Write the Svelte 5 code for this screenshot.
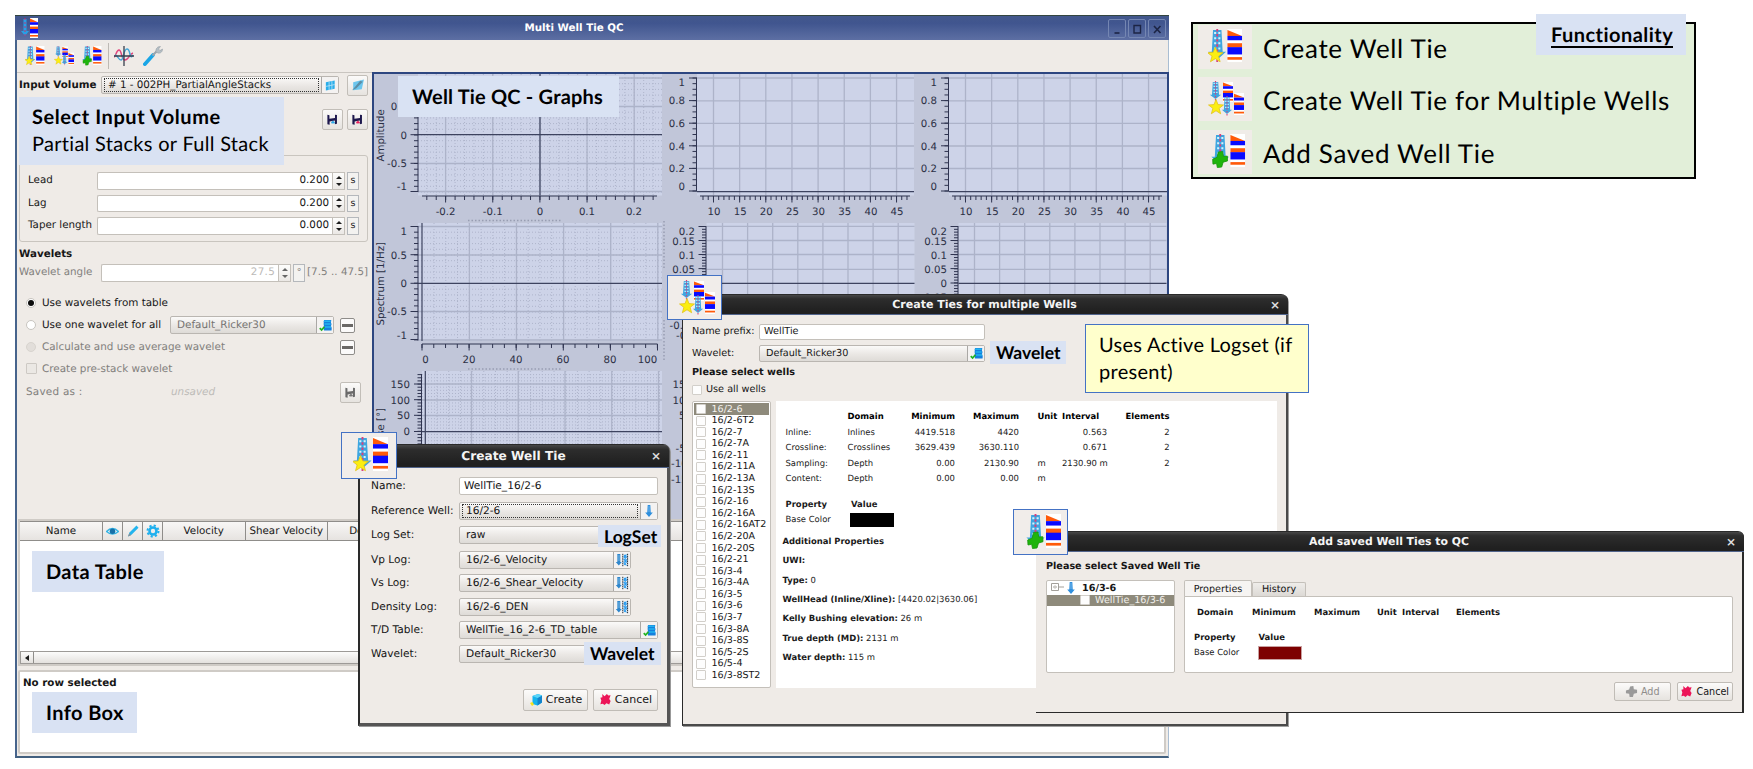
<script>
  const range = (a, b, s) => {
    const out = [];
    for (let v = a; v <= b + 0.001; v += s) out.push(+v.toFixed(2));
    return out;
  };

  const wells = [
    '16/2-6', '16/2-6T2', '16/2-7', '16/2-7A', '16/2-11', '16/2-11A', '16/2-13A', '16/2-13S',
    '16/2-16', '16/2-16A', '16/2-16AT2', '16/2-20A', '16/2-20S', '16/2-21', '16/3-4', '16/3-4A',
    '16/3-5', '16/3-6', '16/3-7', '16/3-8A', '16/3-8S', '16/5-2S', '16/5-4', '16/3-8ST2'
  ];

  const domain = [
    ['', 'Domain', 'Minimum', 'Maximum', 'Unit', 'Interval', 'Elements'],
    ['Inline:', 'Inlines', '4419.518', '4420', '', '0.563', '2'],
    ['Crossline:', 'Crosslines', '3629.439', '3630.110', '', '0.671', '2'],
    ['Sampling:', 'Depth', '0.00', '2130.90', 'm', '2130.90 m', '2'],
    ['Content:', 'Depth', '0.00', '0.00', 'm', '', '']
  ];

  const extra = [
    ['Additional Properties', ''],
    ['UWI:', ''],
    ['Type:', '0'],
    ['WellHead (Inline/Xline):', '[4420.02|3630.06]'],
    ['Kelly Bushing elevation:', '26 m'],
    ['True depth (MD):', '2131 m'],
    ['Water depth:', '115 m']
  ];

  const tieRows = [
    { label: 'Reference Well:', value: '16/2-6', icon: 'well', focus: true },
    { label: 'Log Set:', value: 'raw', icon: '' },
    { label: 'Vp Log:', value: '16/2-6_Velocity', icon: 'log', short: true },
    { label: 'Vs Log:', value: '16/2-6_Shear_Velocity', icon: 'log', short: true },
    { label: 'Density Log:', value: '16/2-6_DEN', icon: 'log', short: true },
    { label: 'T/D Table:', value: 'WellTie_16_2-6_TD_table', icon: 'db' },
    { label: 'Wavelet:', value: 'Default_Ricker30', icon: '' }
  ];

  // Plot definitions in panel coordinates
  const plots = [
    {
      x: 418, y: 74, w: 244, h: 121.5, ax: 418, ay0: 78, ay1: 191.5,
      gx: range(445.6, 640, 47.15), gy: [106.5, 163.5, 191.5, 78],
      mx: range(426.8, 660, 9.43), my: range(78, 194, 5.7),
      zx: 540, zy: 134.7,
      yt: [78, 106.5, 134.7, 163.3, 191.5], ymt: range(78, 191.5, 5.7),
      yl: [['0.5', 106.5], ['0', 134.7], ['-0.5', 163.3], ['-1', 186]], lx: 407,
      sy: 196, s0: 422, s1: 657, xt: range(445.6, 640, 47.15), xmt: range(426.8, 657, 9.43),
      xl: [['-0.2', 445.6], ['-0.1', 492.8], ['0', 540], ['0.1', 587], ['0.2', 634]], ly: 211
    },
    ...[0, 252].map((o) => ({
      x: 697 + o, y: 74, w: o ? 218 : 217, h: 121.5, ax: 696.5 + o, ay0: 78, ay1: 191,
      gx: range(713.5 + o, 900 + o, 26.15), gy: [78, 100.8, 123.3, 146, 168.5], mx: [], my: [],
      zx: 0, zy: 191.7,
      yt: range(78, 192, 22.6), ymt: range(78, 191, 5.65),
      yl: [['1', 82], ['0.8', 100.5], ['0.6', 123.3], ['0.4', 145.8], ['0.2', 168.5], ['0', 186]], lx: 685 + o,
      sy: 196, s0: 700 + o, s1: 910 + o, xt: range(713.5 + o, 900 + o, 26.15), xmt: range(703 + o, 910 + o, 5.23),
      xl: [10, 15, 20, 25, 30, 35, 40, 45].map((v, i) => [String(v), 714 + o + i * 26.15]), ly: 211
    })),
    {
      x: 418, y: 223, w: 244, h: 118, ax: 418, ay0: 226.5, ay1: 340,
      gx: range(469.4, 660, 47.1), gy: [226.5, 255, 311.5, 340],
      mx: range(434, 660, 11.77), my: range(226.5, 340, 5.7),
      zx: 422, zy: 283.3,
      yt: [226.5, 254.7, 283.3, 311.5, 339.5], ymt: range(226.5, 340, 5.67),
      yl: [['1', 231], ['0.5', 254.7], ['0', 283], ['-0.5', 311.5], ['-1', 335]], lx: 407,
      sy: 344, s0: 422, s1: 657.5, xt: range(422, 658, 47.1), xmt: range(422, 658, 11.77),
      xl: [['0', 425.5], ['20', 469], ['40', 516], ['60', 563], ['80', 610], ['100', 647.5]], ly: 359.5
    },
    ...[0, 252].map((o) => ({
      x: 706.5 + o, y: 223, w: 208, h: 118, ax: 706 + o, ay0: 226.5, ay1: 340,
      gx: range(722.5 + o, 900 + o, 25.1), gy: [226.3, 240.5, 254.5, 269.3], mx: [], my: [],
      zx: 0, zy: 283.4,
      yt: [226.5, 240.5, 254.5, 268.6, 283], ymt: range(226.5, 340, 2.82),
      yl: [['0.2', 231], ['0.15', 240.8], ['0.1', 254.7], ['0.05', 268.7], ['0', 282.7], ['-0.05', 297]], lx: 695 + o,
      sy: 0, s0: 0, s1: 0, xt: [], xmt: [], xl: [], ly: 0
    })),
    {
      x: 422, y: 371, w: 240, h: 120, ax: 421.5, ay0: 374.5, ay1: 490,
      gx: range(471.5, 660, 46.75), gy: [384, 400, 415.5, 447, 463],
      mx: range(437, 660, 11.7), my: range(374.6, 490, 3.15),
      zx: 425.3, zy: 431.6,
      yt: [384, 399.7, 415.3, 431.5, 447], ymt: range(374.6, 490, 3.15),
      yl: [['150', 384], ['100', 399.7], ['50', 415.5], ['0', 431.3]], lx: 410,
      sy: 0, s0: 0, s1: 0, xt: [], xmt: [], xl: [], ly: 0
    }
  ];

  const strays = [
    ['-0.1', 669.5, 325.5], ['-0.15', 676, 335], ['150', 672.6, 384], ['100', 672.6, 399.7], ['50', 679, 415.5],
    ['-50', 675.5, 448], ['-100', 671, 463.5], ['-150', 671, 479.3]
  ];
</script>

{#snippet derrick(cx, y0, h, w)}
  <path d="M{cx - w * 0.27} {y0 + 1}h{w * 0.54}l{w * 0.08} {h * 0.64}h{w * 0.22}L{cx} {y0 + h * 0.9}L{cx - w * 0.57} {y0 + 1 + h * 0.64}h{w * 0.22}z" fill="#3ea6e0" />
  {#each [0.12, 0.27, 0.42, 0.57] as f}
    <path d="M{cx - w * 0.2} {y0 + h * f}h{w * 0.13}M{cx + w * 0.07} {y0 + h * f}h{w * 0.13}" stroke="#d8eefa" stroke-width={h * 0.06} />
  {/each}
  <path d="M{cx} {y0}V{y0 + h}" stroke="#d8407c" stroke-width={w * 0.12} stroke-dasharray="{h * 0.07} {h * 0.08}" />
{/snippet}

{#snippet strata(x, y, w, h)}
  <rect {x} {y} width={w} height={h} fill="#fff" />
  <path d="M{x} {y + h * 0.03}L{x + w} {y + h * 0.21}H{x}z" fill="#ff5a0a" />
  <rect {x} y={y + h * 0.21} width={w} height={h * 0.13} fill="#0a0aff" />
  <rect {x} y={y + h * 0.43} width={w} height={h * 0.13} fill="#ff5a0a" />
  <rect {x} y={y + h * 0.55} width={w} height={h * 0.22} fill="#0a0aff" />
  <rect {x} y={y + h * 0.85} width={w} height={h * 0.08} fill="#ff5a0a" />
{/snippet}

{#snippet star(cx, cy, r)}
  <path transform="translate({cx} {cy}) scale({r})" d="M0-1L.27-.32 1-.27.42.18.62.9 0 .5-.62.9-.42.18-1-.27-.27-.32z" fill="#fbee12" stroke="#e0c018" stroke-width=".1" />
{/snippet}

{#snippet tieIcon(kind, size)}
  <svg viewBox="0 0 36 36" width={size} height={size}>
    {#if kind === 'multi'}
      {@render strata(15, 1, 10, 20)}
      {@render derrick(7.5, 0, 20, 10)}
      {@render strata(26, 12, 10, 22)}
      {@render derrick(19, 15, 20, 9)}
      {@render star(8, 26, 7.5)}
    {:else if kind === 'add'}
      {@render strata(20, 0, 15, 34)}
      {@render derrick(9.5, 0, 35, 16)}
      <path d="M7.500 18.500l4.500-.5.800 5 4-.3.200 5-4.500 1.300-1.500 5-4.500.5-.8-4.200L2 31l-.3-5 4.500-2z" fill="#1fb40c" stroke="#17940a" stroke-width=".8" stroke-linejoin="round" />
    {:else}
      {@render strata(20, 0, 15, 34)}
      {@render derrick(9.5, 0, 35, 16)}
      {@render star(7.5, 26.500, 8)}
    {/if}
  </svg>
{/snippet}

{#snippet dbIcon()}
  <svg viewBox="0 0 14 14" width="13" height="13">
    <path d="M5.500 1h7.500q.5.800 0 1.800-.5 1.200.3 2 .4 1-.2 2-.6 1.200.4 2.200.4 1.500 0 3.500H5.500q-1-2 0-3.500-1-1.500 0-2.500-1.300-1-.3-2.300-.7-1.800.3-3.200z" fill="#1680dc" />
    <path d="M5.500 2.500h7M6 5.500h6.500M6.500 8.700h6.500" stroke="#22b4f0" stroke-width="1.600" />
    <path d="M.8 9.800l2 2L5.800 8.500" fill="none" stroke="#22b422" stroke-width="1.800" />
  </svg>
{/snippet}

{#snippet logIcon()}
  <svg viewBox="0 0 14 14" width="14" height="14">
    <path d="M2.300 1h3v8h1.500L3.800 12.500.8 9h1.500z" fill="#2e86cc" />
    <path d="M2.300 3h3M2.300 5h3M2.300 7h3" stroke="#a9d6f2" stroke-width=".6" />
    <path d="M7.800.8v12.400M12.600.8v12.400" stroke="#222c38" stroke-width="1" stroke-dasharray="1.600 .6" />
    <path d="M9 2l2.500 2L9 6.500l2.500 2.500L9 12M11.500 1.500L9 4l2.500 3L9 9.500l2.500 3" fill="none" stroke="#2a9cf0" stroke-width="1.100" />
  </svg>
{/snippet}

{#snippet wellGlyph()}
  <svg viewBox="0 0 10 14" width="10" height="14">
    <path d="M3.700 1h2.600l.5 7.500h2L5 13 1.200 8.500h2z" fill="#2f8fdd" />
    <path d="M3.500 3h3M3.500 5h3M3.500 7h3" stroke="#9fd2f5" stroke-width=".6" />
  </svg>
{/snippet}

{#snippet saveIcon(main, accent)}
  <svg viewBox="0 0 14 14" width="13" height="13">
    <path d="M1.500 2l2.200.3v4l6-.8V1.800l2.100.3v9.500l-2.200.5V8.200l-5.700.9v3.500l-2.400-.4z" fill={main} />
    <path d="M4.900 2.500l4-.3v1.800l-4 .6z" fill="#f4f2f4" />
    <path d="M5.700 10.800l1.800-1.900 1.800 1.900M7.500 9v2.500" fill="none" stroke={accent} stroke-width="1.200" />
  </svg>
{/snippet}

{#snippet spin()}
  <span class="spin"><i class="up"></i><i class="down"></i></span>
{/snippet}

{#snippet cancelIcon()}
  <svg viewBox="0 0 14 14" width="13" height="13">
    <path d="M3.500 1l2.500 2.500L8.500 1l1.500 1.800 2.500-.3-1.500 4 1.500 2-1.500 4-3-1.500-2 2-2-1.500-2.500.5 1-4L1.500 5l2.200-.5z" fill="#ec1558" />
  </svg>
{/snippet}

<div class="desk">
  <section class="main">
    <header class="mtitle">
      <svg class="mlogo" viewBox="0 0 20 20" width="20" height="20">
        <path d="M4.500 1h3v12h2.500L6 18 2 13h2.500z" fill="#28a0e6" />
        <path d="M6 0v20" stroke="#c03070" stroke-width="1" stroke-dasharray="2 2" />
        {@render strata(11, 0, 8, 20)}
      </svg>
      <b>Multi Well Tie QC</b>
      <span class="wbtns">
        <i><svg viewBox="0 0 14 18" width="14" height="18"><path d="M4.500 13h5" stroke="#1c2444" stroke-width="1.600" /></svg></i>
        <i><svg viewBox="0 0 14 18" width="14" height="18"><path d="M4 5.500h6.500v7.500H4z" fill="none" stroke="#1c2444" stroke-width="1.400" /></svg></i>
        <i><svg viewBox="0 0 14 18" width="14" height="18"><path d="M4 6l6.500 7M10.500 6L4 13" stroke="#1c2444" stroke-width="1.600" /></svg></i>
      </span>
    </header>
    <nav class="tools">
      {@render tieIcon('one', 20)}
      {@render tieIcon('multi', 20)}
      {@render tieIcon('add', 20)}
      <i class="sep"></i>
      <svg viewBox="0 0 20 20" width="20" height="20">
        <path d="M0 11c2 0 2-7 5-7s2 10 6 10 4-6 8-7" fill="none" stroke="#e0447c" stroke-width="1.400" />
        <path d="M1 9c4 1 3 5 6 5s2-11 6-11 2 12 6 6" fill="none" stroke="#44a6d8" stroke-width="1.500" />
        <path d="M0 10h20M10 0v20" stroke="#38404e" stroke-width="1.300" />
      </svg>
      <svg class="wrench" viewBox="0 0 20 20" width="20" height="20">
        <path d="M1.800 18.200L10 9" stroke="#1ba6e6" stroke-width="3.600" stroke-linecap="round" />
        <path d="M9.500 9.500l5-5" stroke="#9aa6ae" stroke-width="2.200" />
        <path d="M13 5.500c-.5-3 1.500-5 4.500-5l-2 2.500 1.500 1.500 2.500-1.500c0 3-2 4.700-5 4z" fill="#b4bec4" stroke="#8c979e" stroke-width=".5" />
      </svg>
    </nav>

    <div class="middle">
      <aside class="panel">
        <div class="row r-input">
          <b class="lbl">Input Volume</b>
          <div class="combo focus"><span># 1 - 002PH_PartialAngleStacks</span><em>
            <svg viewBox="0 0 14 14" width="13" height="13"><path d="M2 3.500L11.500 1.500v9L2 12.500z" fill="#2aaeea" /><path d="M2 8l9.500-2M5.500 3v9M8.500 2.300v9" stroke="#c4e8f8" stroke-width=".8" /></svg>
          </em></div>
          <button class="sq" aria-label="Edit volume">
            <svg viewBox="0 0 14 14" width="15" height="15"><path d="M3 4l10-2.500-2 9-8 1z" fill="#6cc6ee" /><path d="M2 11.500L9.500 2.500l2.500 1L6 9.500z" fill="#5c8ea6" /></svg>
          </button>
        </div>
        <div class="row r-save">
          <button class="sq" aria-label="Save">{@render saveIcon('#1d174d', '#2ba8e8')}</button>
          <button class="sq" aria-label="Save as">{@render saveIcon('#1d174d', '#e8205c')}</button>
        </div>
        <div class="group">
          {#each [['Lead', '0.200'], ['Lag', '0.200'], ['Taper length', '0.000']] as [l, v]}
            <div class="num"><span class="nl">{l}</span><span class="nf">{v}</span>{@render spin()}<span class="unit">s</span></div>
          {/each}
        </div>
        <b class="wlh">Wavelets</b>
        <div class="num angle dim"><span class="nl">Wavelet angle</span><span class="nf">27.5</span>{@render spin()}<span class="unit">°</span><span class="rng">[7.5 .. 47.5]</span></div>
        <div class="opt o1"><i class="radio on"></i><span>Use wavelets from table</span></div>
        <div class="opt o2"><i class="radio"></i><span>Use one wavelet for all</span>
          <div class="combo grey"><span>Default_Ricker30</span><em>{@render dbIcon()}</em></div><i class="minus"></i></div>
        <div class="opt o3 dim"><i class="radio off"></i><span>Calculate and use average wavelet</span><i class="minus"></i></div>
        <div class="opt o4 dim"><i class="check"></i><span>Create pre-stack wavelet</span></div>
        <div class="opt o5 dim"><span class="sa">Saved as :</span><span class="un">unsaved</span><button class="sq" aria-label="Save wavelet">{@render saveIcon('#6a6a6a', '#777')}</button></div>
      </aside>

      <svg class="graphs" viewBox="372 72 797 451" width="797" height="451">
        <rect x="372" y="72" width="797" height="451" fill="#c1c6d9" />
        {#each plots as p}
          <rect x={p.x} y={p.y} width={p.w} height={p.h} fill="#cdd3e8" />
          {#each p.mx as x}<path d="M{x} {p.y}V{p.y + p.h}" class="minor" />{/each}
          {#each p.my as y}<path d="M{p.x} {y}H{p.x + p.w}" class="minor" />{/each}
          {#each p.gx as x}<path d="M{x} {p.y}V{p.y + p.h}" class="major" />{/each}
          {#each p.gy as y}<path d="M{p.x} {y}H{p.x + p.w}" class="major" />{/each}
          <path d="M{p.x} {p.zy}H{p.x + p.w}" class="zero" />
          {#if p.zx}<path d="M{p.zx} {p.y}V{p.y + p.h}" class="zero" />{/if}
          <path d="M{p.ax} {p.ay0 - 0.5}V{p.ay1 + 0.5}" class="axis" />
          {#each p.ymt as y}<path d="M{p.ax - 4} {y}H{p.ax}" class="axis" />{/each}
          {#each p.yt as y}<path d="M{p.ax - 7.5} {y}H{p.ax}" class="axis" />{/each}
          {#each p.yl as [t, y]}<text x={p.lx} y={y + 3.8} text-anchor="end">{t}</text>{/each}
          {#if p.sy}
            <path d="M{p.s0} {p.sy}H{p.s1}" class="axis" />
            {#each p.xmt as x}<path d="M{x} {p.sy}v4" class="axis" />{/each}
            {#each p.xt as x}<path d="M{x} {p.sy}v6.500" class="axis" />{/each}
            {#each p.xl as [t, x]}<text {x} y={p.ly + 3.8} text-anchor="middle">{t}</text>{/each}
          {/if}
        {/each}
        {#each strays as [t, x, y]}<text {x} y={y + 3.8}>{t}</text>{/each}
        <text transform="translate(383.500 161.500) rotate(-90)">Amplitude</text>
        <text transform="translate(383.500 325.500) rotate(-90)">Spectrum [1/Hz]</text>
        <text transform="translate(383.500 408) rotate(-90)" text-anchor="end">Phase [°]</text>
        <path d="M468 220.500H561M468 369H561M664 221V270M664 320V362" class="grip" />
        <rect x="373" y="73" width="795" height="449" fill="none" stroke="#2d4680" stroke-width="2" />
      </svg>
    </div>

    <div class="table">
      <div class="thead">
        <span class="c1">Name</span>
        <span class="ci"><svg viewBox="0 0 14 12" width="13" height="12"><path d="M.5 6.500Q7 0 13.500 6.500 7 12 .5 6.500z" fill="#eef6fa" stroke="#35b4e4" stroke-width="1.600" /><circle cx="7" cy="6.300" r="3" fill="#1670a8" /></svg></span>
        <span class="ci"><svg viewBox="0 0 14 14" width="14" height="14"><path d="M2 12.500l1.500-4L10.500 1.500l2 2.300-7 7z" fill="#22b4ee" /><path d="M2 12.500l1.200-3.200 1.900 1.900z" fill="#8a8f94" /></svg></span>
        <span class="ci"><svg viewBox="0 0 14 14" width="14" height="14"><circle cx="7" cy="7" r="3.500" fill="none" stroke="#1fb0ee" stroke-width="2.600" /><circle cx="7" cy="7" r="5.500" fill="none" stroke="#1fb0ee" stroke-width="2" stroke-dasharray="2.160 2.160" /></svg></span>
        <span class="c2">Velocity</span>
        <span class="c3">Shear Velocity</span>
        <span class="c4">Density</span>
        <span class="c5"></span>
      </div>
      <div class="tbody"></div>
      <div class="hscroll"><i></i><span></span></div>
    </div>
    <div class="info"><b>No row selected</b></div>
  </section>

  <div class="tag t-select"><b>Select Input Volume</b><br />Partial Stacks or Full Stack</div>
  <div class="tag t-graphs"><b>Well Tie QC - Graphs</b></div>
  <div class="tag t-table"><b>Data Table</b></div>
  <div class="tag t-info"><b>Info Box</b></div>

  <section class="dlg create">
    <header><b>Create Well Tie</b><i class="x">×</i></header>
    <div class="form">
      <div class="frow"><span>Name:</span><div class="input">WellTie_16/2-6</div></div>
      {#each tieRows as r}
        <div class="frow"><span>{r.label}</span>
          <div class="combo" class:focus={r.focus} class:short={r.short}><span>{r.value}</span>{#if r.icon}<em>
            {#if r.icon === 'well'}{@render wellGlyph()}{:else if r.icon === 'log'}{@render logIcon()}{:else}{@render dbIcon()}{/if}
          </em>{/if}</div>
        </div>
      {/each}
      <footer>
        <button class="btn"><svg viewBox="0 0 14 14" width="14" height="14"><path d="M3.500 3L9 1l4 1.500V9.500L8.500 12.500 3.500 11z" fill="#14b4ee" /><path d="M8.500 5L13 2.500v7L8.500 12.500z" fill="#1284cc" /><path d="M3.500 3L9 1l4 1.500L8.500 5z" fill="#5cd4f8" /><path d="M1 10l2.500-1L5 11.500 3 13z" fill="#f6e21a" /></svg>Create</button>
        <button class="btn">{@render cancelIcon()}Cancel</button>
      </footer>
    </div>
  </section>
  <div class="tag sm t-logset"><b>LogSet</b></div>
  <div class="tag sm t-wav1"><b>Wavelet</b></div>
  <div class="tile k1">{@render tieIcon('one', 36)}</div>

  <section class="dlg multi">
    <header><b>Create Ties for multiple Wells</b><i class="x">×</i></header>
    <div class="mbody">
      <div class="frow"><span>Name prefix:</span><div class="input">WellTie</div></div>
      <div class="frow"><span>Wavelet:</span><div class="combo"><span>Default_Ricker30</span><em>{@render dbIcon()}</em></div></div>
      <b class="psw">Please select wells</b>
      <div class="all"><i class="check w"></i>Use all wells</div>
      <div class="split">
        <ul class="wells">
          {#each wells as w, i}<li class:sel={i === 0}><i class="check w"></i>{w}</li>{/each}
        </ul>
        <div class="props">
          <div class="dgrid">
            {#each domain as row, i}{#each row as c, j}<span class:b={i === 0} class:r={j === 2 || j === 3 || j === 6 || (j === 5 && i > 0)} class:u={j === 4}>{c}</span>{/each}{/each}
          </div>
          <div class="pgrid"><b>Property</b><b class="v">Value</b><span>Base Color</span><i class="black"></i></div>
          {#each extra as [k, v]}<p><b>{k}</b> {v}</p>{/each}
        </div>
      </div>
      <div class="under"><i></i><i></i></div>
    </div>
  </section>
  <div class="tag sm t-wav2"><b>Wavelet</b></div>
  <div class="note">Uses Active Logset (if<br />present)</div>
  <div class="tile k2">{@render tieIcon('multi', 36)}</div>

  <section class="dlg saved">
    <header><b>Add saved Well Ties to QC</b><i class="x">×</i></header>
    <div class="sbody">
      <b class="pst">Please select Saved Well Tie</b>
      <div class="scols">
        <div class="tree">
          <div class="t1"><svg viewBox="0 0 14 12" width="14" height="12"><path d="M.5 1.500h7v7h-7zM2 5h4M7.500 5H13" fill="none" stroke="#a3a09a" stroke-width="1" /><path d="M4 3v4" stroke="#c9c6c0" /></svg>{@render wellGlyph()}<b>16/3-6</b></div>
          <div class="t2"><i class="check w"></i>WellTie_16/3-6</div>
        </div>
        <div class="tabbox">
          <div class="tabs"><span class="on">Properties</span><span>History</span></div>
          <div class="pane">
            <div class="sh"><b>Domain</b><b>Minimum</b><b>Maximum</b><b>Unit</b><b>Interval</b><b>Elements</b></div>
            <div class="pgrid"><b>Property</b><b>Value</b><span>Base Color</span><i class="red"></i></div>
          </div>
        </div>
      </div>
      <footer>
        <button class="btn off"><svg viewBox="0 0 14 14" width="13" height="13"><path d="M5.500 1.500l3.500-.5.500 3.500 3.500.5v3.500l-3.500 1-1 3.500H5l-.5-3.500-3.500-.5V6l3.500-1.200z" fill="#9a9a9a" /></svg>Add</button>
        <button class="btn">{@render cancelIcon()}Cancel</button>
      </footer>
    </div>
  </section>
  <div class="tile k3">{@render tieIcon('add', 36)}</div>

  <section class="func">
    <div class="fr"><span class="pic">{@render tieIcon('one', 35)}</span><span class="f1">Create Well Tie</span></div>
    <div class="fr"><span class="pic">{@render tieIcon('multi', 36)}</span><span class="f2">Create Well Tie for Multiple Wells</span></div>
    <div class="fr"><span class="pic p3">{@render tieIcon('add', 35)}</span><span class="f3">Add Saved Well Tie</span></div>
  </section>
  <div class="tag t-func"><b>Functionality</b></div>
</div>

<style>
  :global(body) { background: #fff; overflow: hidden; }
  .desk {
    position: relative; width: 1753px; height: 769px; overflow: hidden; background: #fff;
    font-family: 'DejaVu Sans', sans-serif; font-size: 10.3px; color: #161616; white-space: nowrap;
    text-rendering: geometricPrecision;
  }
  .desk :global(*) { box-sizing: border-box; }
  svg { display: block; flex: none; }
  i, em { font-style: normal; }
  button { font: inherit; color: inherit; padding: 0; margin: 0; }

  /* main window */
  .main {
    position: absolute; left: 15px; top: 15px; width: 1154px; height: 743px; background: #efebe7;
    border-left: 2px solid #47648c; border-right: 1px solid #a9bdd2; border-bottom: 2px solid #42607f;
    display: flex; flex-direction: column;
  }
  .mtitle {
    height: 25px; margin: 0 -1px 0 -2px; border-top: 1px solid #33453f; display: flex; align-items: center; justify-content: space-between;
    background: linear-gradient(#43588c, #40558f 30%, #5d6fa3); color: #fff; padding: 0 3px 0 4px;
  }
  .mtitle b { padding-left: 1px; }
  .wbtns { display: flex; gap: 2px; }
  .wbtns i { width: 18px; height: 19px; border: 1px solid #7486b2; border-radius: 2px; display: grid; place-items: center; }
  .tools { height: 32px; display: flex; align-items: center; padding: 0 0 1px 8px; gap: 8.500px; }
  .tools .sep { width: 1px; height: 26px; background: #bdb9b4; margin: 0 -3px; }
  .middle { display: flex; height: 451px; flex: none; margin-right: -1px; }
  .graphs { font-size: 10.2px; }
  .graphs text { fill: #2c3045; }
  .minor { stroke: #aeb4cb; stroke-width: 1; stroke-dasharray: 1 2; }
  .major { stroke: #adb3c9; stroke-width: 1.3; }
  .zero { stroke: #3d435f; stroke-width: 1.2; }
  .axis { stroke: #2f3450; stroke-width: 1; }
  .grip { stroke: #989db2; stroke-width: 1.5; stroke-dasharray: 1.500 2; fill: none; }

  .panel { flex: none; width: 355px; height: 449px; border-top: 1px solid #c9c5c0; padding-left: 2px; display: flex; flex-direction: column; }
  .row { display: flex; flex: none; }
  .r-input { height: 22px; margin-top: 1px; align-items: center; }
  .r-input .lbl { width: 82px; }
  .r-input .combo { width: 238px; height: 18px; margin-right: 8px; }
  .sq {
    width: 21px; height: 21px; border: 1px solid #c2beb8; border-radius: 2px; display: grid; place-items: center; flex: none;
    background: linear-gradient(#fbfaf9, #e6e3df);
  }
  .r-save { margin: 13px 0 0 303px; gap: 4px; height: 21px; }
  .group { flex: none; margin-top: 25px; width: 349px; height: 87px; border: 1px solid #c9c5bf; border-radius: 3px; padding: 16px 0 0 8px; display: flex; flex-direction: column; gap: 5px; }
  .num { display: flex; flex: none; height: 17.500px; align-items: stretch; line-height: 16px; }
  .num > * { flex: none; }
  .nl { width: 69px; }
  .nf { width: 235px; background: #fff; border: 1px solid #c4c0ba; border-right: 0; text-align: right; padding-right: 3px; border-radius: 2px 0 0 2px; line-height: 15px; }
  .spin { width: 13px; border: 1px solid #c4c0ba; background: linear-gradient(#fdfdfc, #ebe8e5); display: flex; flex-direction: column; justify-content: space-around; align-items: center; padding: 1px 0; }
  .up, .down { border: 3px solid transparent; width: 0; height: 0; }
  .up { border-top: 0; border-bottom: 3.500px solid #1d1d1d; }
  .down { border-bottom: 0; border-top: 3.500px solid #1d1d1d; }
  .unit { width: 12px; margin-left: 2px; border: 1px solid #b5b8bc; background: #f3f2f0; text-align: center; font-size: 9.500px; line-height: 15px; }
  .dim { color: #82807d; }
  .wlh { height: 14px; line-height: 14px; margin-top: 5px; }
  .angle { margin-top: 3px; }
  .angle .nl { width: 82px; }
  .angle .nf { width: 177px; color: #bcbab7; letter-spacing: .3px; }
  .angle .up { border-bottom-color: #666; }
  .angle .down { border-top-color: #666; }
  .rng { padding-left: 2px; letter-spacing: .05px; }
  .opt { display: flex; flex: none; align-items: center; height: 18px; padding-left: 7px; font-size: 10.4px; }
  .opt > span { margin-left: 6px; }
  .o1 { margin-top: 12px; }
  .o2 { margin-top: 4.500px; }
  .o2 > span { width: 122px; }
  .o2 .combo { width: 164px; height: 18px; margin-left: 6px; margin-right: 6px; }
  .o3 { margin-top: 4px; }
  .o3 > span { width: 298px; }
  .o4 { margin-top: 3.500px; }
  .o4 .check { margin-right: -1px; }
  .o5 { margin-top: 4px; height: 21px; }
  .o5 > .sa { margin-left: 0; width: 145px; letter-spacing: .25px; }
  .o5 > .un { margin-left: 0; width: 169px; font-style: italic; color: #bdbbb8; }
  .radio { width: 10px; height: 10px; border: 1px solid #c8c5c0; border-radius: 50%; background: #fff; flex: none; display: grid; place-items: center; }
  .radio.on::after { content: ''; width: 6px; height: 6px; background: #0c0c0c; border-radius: 50%; }
  .radio.off { background: #e2deda; border-color: #d8d4cf; }
  .check { width: 11px; height: 11px; border: 1px solid #cdc9c4; background: #ebe8e4; flex: none; border-radius: 1px; }
  .check.w { background: #fdfdfd; border-color: #d2cfca; width: 10px; height: 10px; }
  .minus { width: 15px; height: 15px; border: 1px solid #8e8c89; border-radius: 2px; background: #fbfafa; display: grid; place-items: center; flex: none; }
  .minus::after { content: ''; width: 11px; height: 3px; background: #6a6866; }

  .combo {
    display: flex; border: 1px solid #bab6b1; border-radius: 2px; background: linear-gradient(#fbfaf9, #eae7e4 55%, #dedbd7);
    align-items: stretch; flex: none;
  }
  .combo > span { flex: 1; padding-left: 6px; display: flex; align-items: center; overflow: hidden; }
  .combo > em { width: 17px; border-left: 1px solid #aaa8a5; display: grid; place-items: center; background: #f4f2f1; }
  .combo.focus > span { border: 1px dotted #333; margin: 1px 2px; padding-left: 3px; }
  .combo.grey > span { color: #767472; }

  .table { flex: none; margin: -4px 2px 0 1px; height: 147px; border: 2px solid #cfcbc6; background: #fff; display: flex; flex-direction: column; position: relative; }
  .thead { display: flex; height: 20px; border-top: 1px solid #8f8d8a; border-bottom: 1px solid #8f8d8a; }
  .thead span { background: linear-gradient(#f8f7f6, #e6e3e0); border-right: 1.500px solid #8f8d8a; display: grid; place-items: center; flex: none; }
  .thead .c1 { width: 83px; }
  .thead .ci { width: 20px; }
  .thead .c2, .thead .c3, .thead .c4 { width: 82.500px; }
  .thead .c5 { flex: 1; }
  .tbody { flex: 1; }
  .hscroll { height: 13px; border: 1px solid #9d9a97; display: flex; background: linear-gradient(#fcfcfb, #e4e1de); }
  .hscroll i { width: 13px; border-right: 1px solid #8f8d8a; display: grid; place-items: center; }
  .hscroll i::after { content: ''; border: 3px solid transparent; border-left: 0; border-right: 4px solid #1d1d1d; }
  .info { flex: none; margin: 4px 2px 0 1px; height: 84px; border: 2px solid #cfcbc6; background: #fff; padding: 3.500px 3px; line-height: 14px; border-radius: 2px; }

  /* callout labels */
  .tag { position: absolute; background: #d9e2f3; color: #000; font-family: Lato, sans-serif; font-size: 20px; letter-spacing: .3px; line-height: 27px; padding: 7px 13px; }
  .t-select { left: 19px; top: 97px; width: 265px; height: 68px; }
  .t-select b { letter-spacing: .57px; }
  .t-graphs { left: 398px; top: 76px; width: 221px; height: 41px; padding: 8px 14px; letter-spacing: .2px; }
  .t-table { left: 32px; top: 551px; width: 132px; height: 41px; padding: 8px 14px; letter-spacing: .4px; }
  .t-info { left: 32px; top: 692px; width: 105px; height: 41px; padding: 8px 14px; letter-spacing: .4px; }
  .t-func { left: 1536px; top: 14px; width: 150px; height: 41px; padding: 8px 15px; letter-spacing: .45px; }
  .t-func b { border-bottom: 2px solid #000; display: inline-block; line-height: 25px; height: 25px; }
  .tag.sm { font-size: 17.5px; letter-spacing: 0; padding: 0 0 0 6px; line-height: 23px; }
  .t-logset { left: 598px; top: 525px; width: 63px; height: 22px; }
  .t-wav1 { left: 584px; top: 642px; width: 77px; height: 23px; }
  .t-wav2 { left: 990px; top: 341px; width: 76px; height: 23px; }
  .note { position: absolute; left: 1085px; top: 324px; width: 224px; height: 69px; background: #ffc; border: 1px solid #4472c4; font: 20px/27px Lato, sans-serif; letter-spacing: .3px; padding: 7px 13px; color: #000; }
  .tile { position: absolute; background: #f1edea; border: 1px solid #4472c4; }
  .k1 { left: 341px; top: 432px; width: 56px; height: 47px; padding: 4px 0 0 11px; }
  .k2 { left: 667px; top: 275px; width: 55px; height: 45px; padding: 4px 0 0 11px; }
  .k3 { left: 1013px; top: 509px; width: 55px; height: 46px; padding: 4px 0 0 12px; }

  /* dialogs */
  .dlg { position: absolute; background: #efebe7; border-style: solid; border-color: #2a2a2a; border-radius: 5px 7px 0 0; }
  .dlg header { display: flex; align-items: center; justify-content: center; position: relative; color: #f4f4f4; background: linear-gradient(#474747, #2d2d2d 20%, #202020 85%); border-bottom: 1px solid #52658c; border-radius: 4px 5px 0 0; margin-right: -2px; padding-right: 2px; }
  .x { position: absolute; right: 8px; font-size: 12px; font-weight: bold; color: #ddd; line-height: 14px; }
  .input { background: #fff; border: 1px solid #c4c0ba; border-radius: 2px; display: flex; align-items: center; padding-left: 4px; }
  .btn { display: flex; align-items: center; justify-content: center; gap: 3px; border: 1px solid #c0bcb6; border-radius: 2px; background: linear-gradient(#fcfbfa, #e6e3df); }
  .btn.off { color: #8f8d8a; }

  .create { left: 358px; top: 444px; width: 312px; height: 282px; border-width: 1px 3px 3px 2px; border-right-color: #555; border-bottom-color: #555; font-size: 10.6px; box-shadow: 1px 1px 0 #999; }
  .create header { height: 23px; font-size: 12.2px; }
  .form { padding: 9px 8px 0 11px; }
  .create .frow { display: grid; grid-template-columns: 88px 1fr; height: 18px; align-items: center; margin-bottom: 5.400px; }
  .create .frow:nth-child(-n + 3) { margin-bottom: 6.700px; }
  .create .input, .create .combo { height: 18px; width: 199px; }
  .create .combo.short { width: 172px; }
  .create footer { display: flex; gap: 5px; margin: 26px 0 0 152px; }
  .create .btn { width: 65px; height: 22px; font-size: 11px; }

  .multi { left: 682px; top: 294px; width: 606px; height: 432px; border-width: 1px 2px 2px 1px; border-right-color: #4a4a4a; border-bottom-color: #4a4a4a; font-size: 9.68px; box-shadow: 1px 1px 0 #a0a0a0; }
  .multi header { height: 20px; font-size: 11.04px; }
  .mbody { padding: 8.500px 9px 0 9px; }
  .multi .frow { display: grid; grid-template-columns: 67px 226px; height: 16px; align-items: center; margin-bottom: 5.500px; }
  .multi .input, .multi .combo { height: 16.500px; }
  .psw { display: block; line-height: 12px; margin-top: 1px; }
  .all { display: flex; align-items: center; gap: 4px; height: 12px; margin-top: 5px; }
  .split { display: flex; gap: 5px; margin-top: 5.500px; height: 287px; }
  .wells { width: 79px; margin: 0; padding: 1.300px 0 0 1px; list-style: none; background: #fff; border: 1px solid #c4c0ba; border-radius: 2px; font-size: 9.55px; }
  .wells li { height: 11.590px; display: flex; align-items: center; gap: 5.500px; padding-left: 2px; margin-right: 1px; }
  .wells .sel { background: #8e8a7b; color: #f5f4f0; }
  .props { flex: 1; background: #fff; padding: 8px 0 0 9.500px; font-size: 8.45px; color: #1a1a1a; }
  .dgrid { display: grid; grid-template-columns: 62px 59.500px 48px 64px 43px 45px 62.500px; grid-auto-rows: 15.500px; line-height: 15.500px; }
  .dgrid .b { font-weight: bold; color: #000; }
  .dgrid .r { text-align: right; }
  .dgrid .u { padding-left: 18.500px; }
  .pgrid { display: grid; grid-template-columns: 64.500px 60px; grid-auto-rows: 15.500px; line-height: 15.500px; margin-top: 10px; }
  .pgrid .v { padding-left: 1px; }
  .pgrid i { width: 44px; height: 14px; background: #000; margin-top: 1px; }
  .props p { margin: 0 0 0 -3px; line-height: 19.370px; height: 19.370px; }
  .props .pgrid { margin-bottom: 4.500px; }
  .under { display: flex; gap: 6px; justify-content: flex-end; margin-top: 22.500px; }
  .under i { width: 57px; height: 1px; background: #bbb8b4; }

  .saved { left: 1036px; top: 531px; width: 708px; height: 182px; border-width: 1px 2px 1px 0; border-radius: 0 6px 0 0; font-size: 9.65px; }
  .saved header { height: 20px; font-size: 10.85px; border-radius: 0 5px 0 0; }
  .sbody { padding: 9px 9px 0 10px; }
  .pst { display: block; line-height: 12px; }
  .scols { display: flex; gap: 9px; margin-top: 7px; height: 93px; }
  .tree { width: 129px; background: #fff; border: 1px solid #c4c0ba; border-radius: 2px; }
  .t1 { display: flex; align-items: center; height: 13.500px; padding: 1px 0 0 4px; gap: 1px; }
  .t1 b { padding-left: 5px; }
  .t2 { display: flex; align-items: center; gap: 5px; height: 11px; padding-left: 33px; background: #8e8a7b; color: #f2f1ec; }
  .tabbox { flex: 1; display: flex; flex-direction: column; }
  .tabs { display: flex; height: 17px; align-items: flex-end; margin-bottom: -1px; }
  .tabs span { height: 14px; width: 54px; border: 1px solid #c4c0ba; border-bottom: 0; background: linear-gradient(#efedea, #dcd9d5); border-radius: 2px 2px 0 0; display: grid; place-items: center; margin-bottom: 1px; }
  .tabs .on { height: 17px; width: 68px; background: #f6f4f2; margin-bottom: 0; }
  .pane { flex: 1; background: #fff; border: 1px solid #c4c0ba; border-radius: 0 2px 2px 2px; font-size: 8.45px; padding: 7.500px 0 0 9px; }
  .sh { display: grid; grid-template-columns: 55px 62px 63px 25px 54px 60px; line-height: 15.500px; padding-left: 3px; }
  .pane .pgrid { margin-top: 9.500px; }
  .pgrid .red { background: #7d0000; border: 1px solid #c9a0a0; margin-left: -1px; }
  .saved footer { display: flex; justify-content: flex-end; gap: 6px; margin-top: 9px; }
  .saved .btn { width: 56.500px; height: 19px; }

  /* functionality legend */
  .func { position: absolute; left: 1191px; top: 22px; width: 505px; height: 157px; background: #e2efd9; border: 2px solid #000; padding: 1px 0 0 5px; }
  .fr { display: flex; height: 52.300px; align-items: flex-start; font: 26px/46px Lato, sans-serif; letter-spacing: .68px; color: #000; }
  .pic { width: 54px; height: 44px; background: #f0ece8; margin-right: 11px; padding: 4px 0 0 10px; flex: none; }
  .pic.p3 { padding-left: 13px; }
</style>
